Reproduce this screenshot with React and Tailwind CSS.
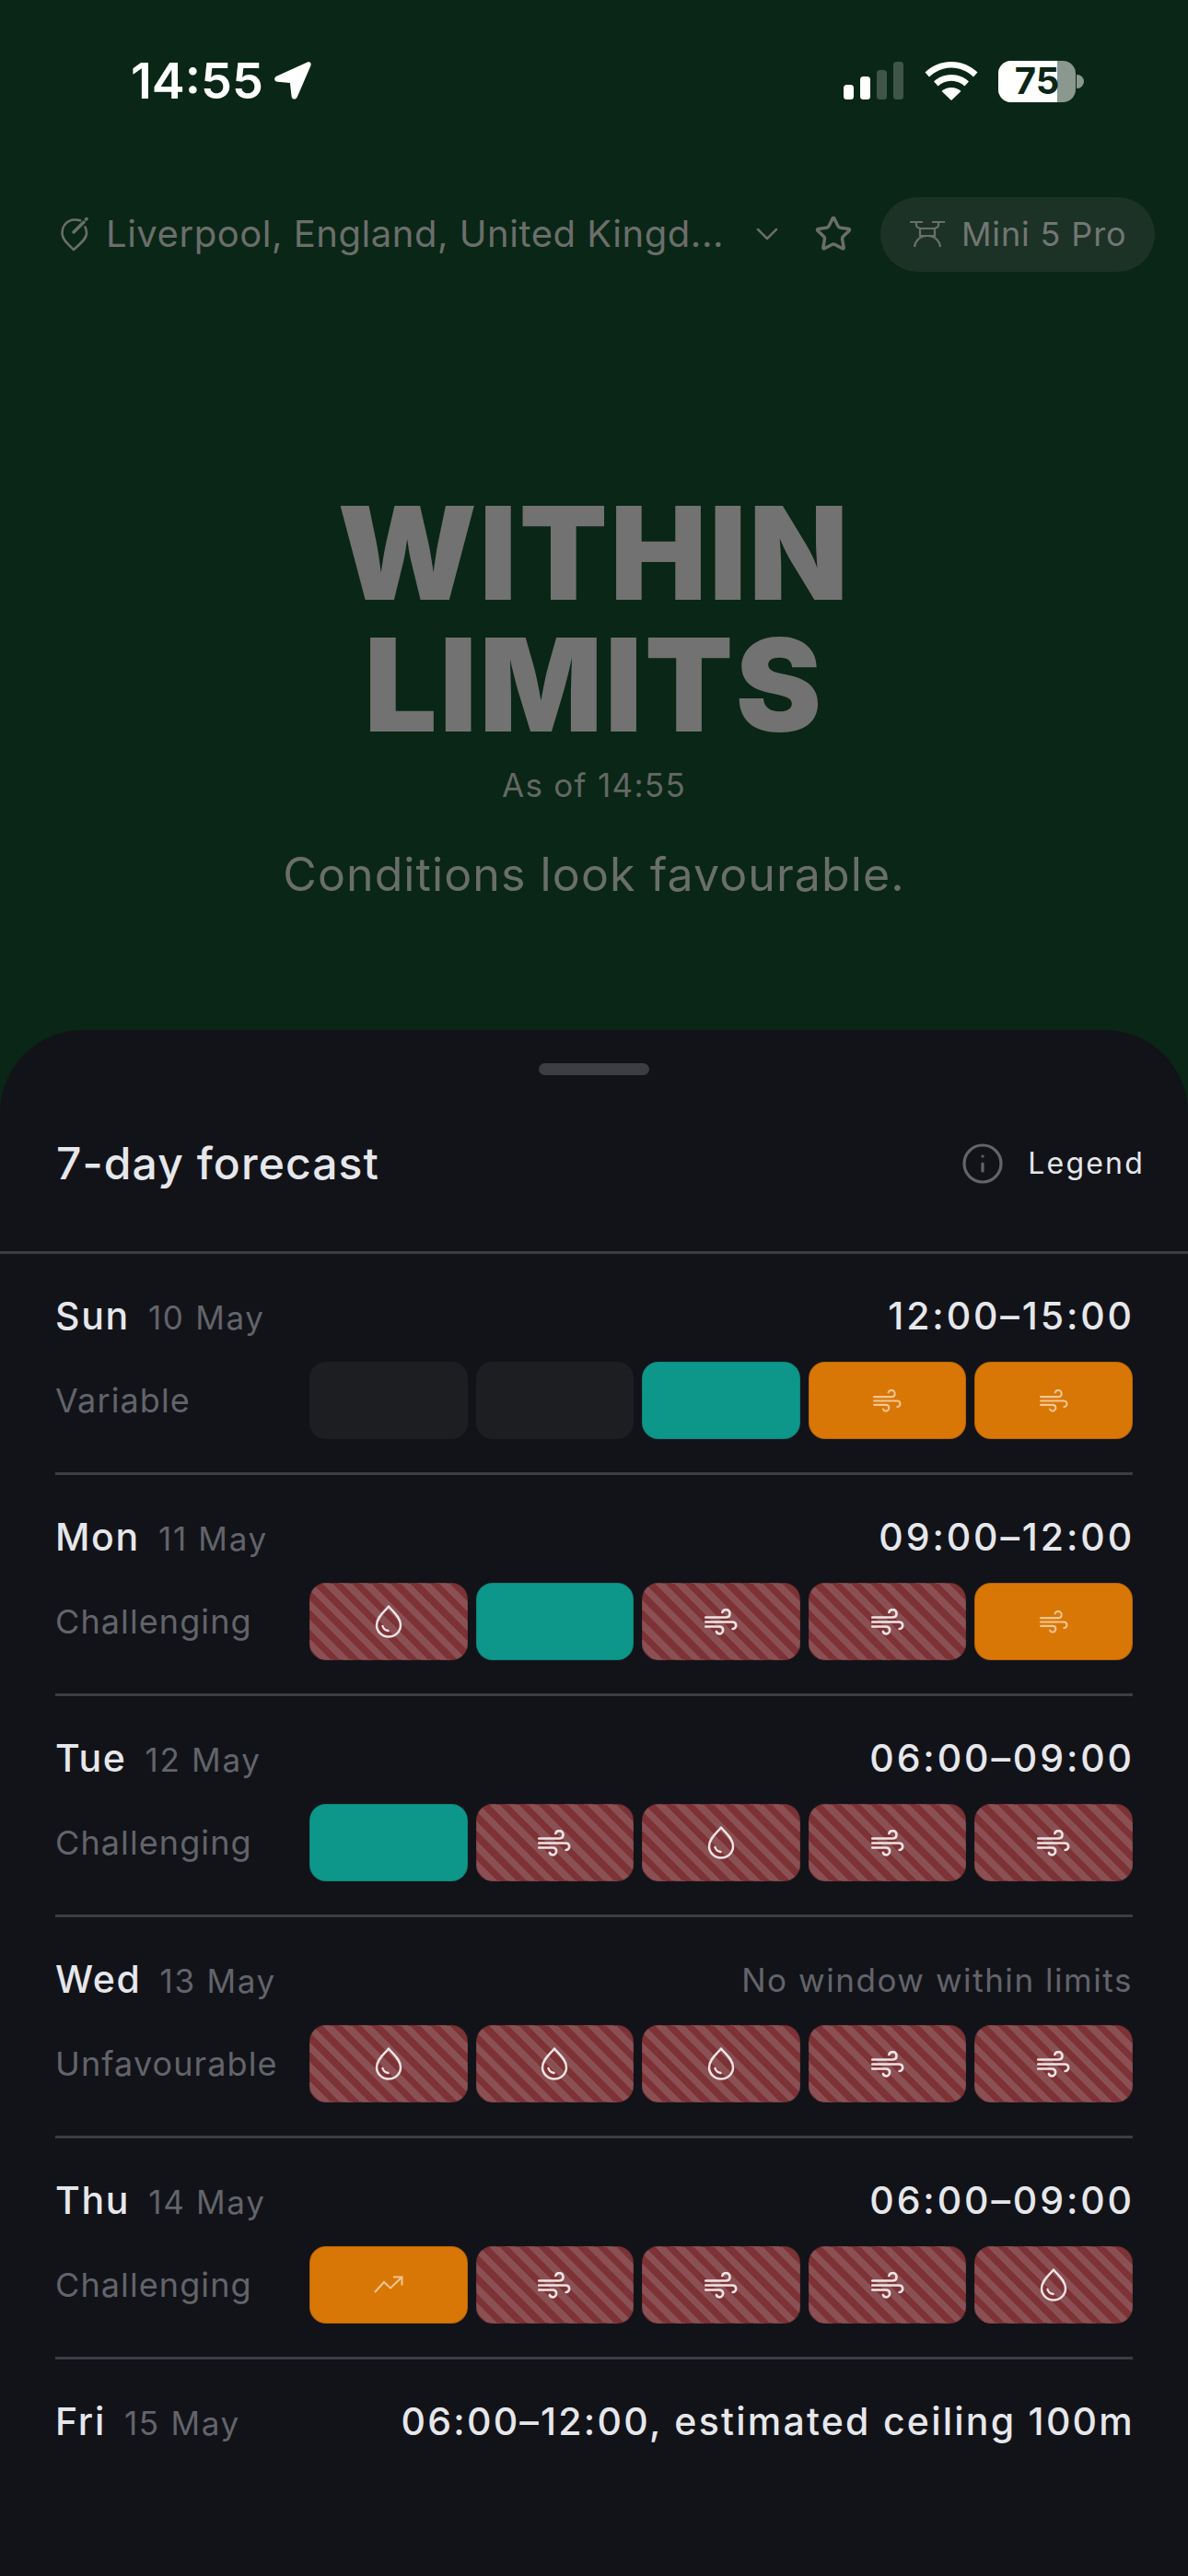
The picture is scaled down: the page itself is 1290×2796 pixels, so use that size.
import React from "react";
import { Star, ChevronDown, Info } from "lucide-react";

const Wind = ({ c, w = 2.2, width = 32, height = 26 }) => (
  <svg width={width} height={height} viewBox="0 0 32 26" fill="none" stroke={c} strokeWidth={w} strokeLinecap="round" className="block">
    <path d="M1 8.500H20.500c2.600 0 4-1.600 4-3.600S23 1 20.800 1c-1.800 0-3.200 1-3.600 2.600" />
    <path d="M1 13H26.500c2.600 0 4 1.600 4 3.400s-1.400 3.300-3.200 3.300" />
    <path d="M1 17.500H14.500c2 0 3.400 1.400 3.400 3.200S16.500 24.500 14.600 24.500c-1.500 0-2.700-.8-3.200-2.100" />
  </svg>
);
const Drop = ({ c }) => (
  <svg width="30" height="36" viewBox="0 0 30 36" fill="none" stroke={c} strokeWidth="2.500" strokeLinecap="round" strokeLinejoin="round" className="block">
    <path d="M15 1.500C11 7 2 13 2 22c0 7 6 12.500 13 12.500S28 29 28 22C28 13 19 7 15 1.500Z" />
    <path d="M8.500 23c.8 2.700 3 4.500 6 5" />
  </svg>
);
const Trend = ({ c }) => (
  <svg width="32" height="20" viewBox="0 0 32 20" fill="none" stroke={c} strokeWidth="2" className="block">
    <path d="M1 18 11 7l7 6.500L30 2" />
    <path d="M21 1.500h9.500V10.500" />
  </svg>
);

const Tile = ({ k }) => {
  if (k === "n") return <div className="h-[84px] rounded-[18px] bg-[#1d1e22]" />;
  if (k === "g") return <div className="h-[84px] rounded-[18px] bg-[#0d978a] border border-black/10" />;
  if (k === "ow")
    return (
      <div className="h-[84px] rounded-[18px] bg-[#d97706] border border-black/15 flex items-center justify-center">
        <Wind c="#f3c694" width={31} height={25} />
      </div>
    );
  if (k === "ot")
    return (
      <div className="h-[84px] rounded-[18px] bg-[#d97706] border border-black/15 flex items-center justify-center">
        <Trend c="#f3c694" />
      </div>
    );
  return (
    <div className="h-[84px] rounded-[18px] flex items-center justify-center border border-black/10 bg-[repeating-linear-gradient(45deg,#7d3336_0px,#7d3336_7.5px,#8b5054_7.5px,#8b5054_15px)]">
      {k === "rw" ? <Wind c="#efe3e4" w={2.4} width={36} height={29} /> : <Drop c="#efe3e4" />}
    </div>
  );
};

const days = [
  ["Sun", "10 May", "12:00–15:00", "Variable", ["n", "n", "g", "ow", "ow"]],
  ["Mon", "11 May", "09:00–12:00", "Challenging", ["rd", "g", "rw", "rw", "ow"]],
  ["Tue", "12 May", "06:00–09:00", "Challenging", ["g", "rw", "rd", "rw", "rw"]],
  ["Wed", "13 May", null, "Unfavourable", ["rd", "rd", "rd", "rw", "rw"]],
  ["Thu", "14 May", "06:00–09:00", "Challenging", ["ot", "rw", "rw", "rw", "rd"]],
];

const DayHead = ({ d, date, t, long }) => (
  <div className="flex items-center justify-between h-[46px]">
    <div className="flex items-baseline">
      <span className="text-[41px] font-medium tracking-[1.7px] text-[#e6e7eb]">{d}</span>
      <span className="text-[35px] tracking-[1.7px] text-[#63646a] ml-[20px]">{date}</span>
    </div>
    {t ? (
      <span className={long ? "text-[41px] font-medium tracking-[2.25px] text-[#e6e7eb] -mr-[2px]" : "text-[41px] font-medium tracking-[2.9px] text-[#e6e7eb] -mr-[2px]"}>{t}</span>
    ) : (
      <span className="text-[35px] tracking-[1.55px] text-[#63646a]">No window within limits</span>
    )}
  </div>
);

export default function App() {
  return (
    <div className="relative w-[1290px] h-[2796px] overflow-hidden bg-[#0a2616] font-['Inter',sans-serif]">
      <div className="h-[214px] flex items-start justify-between pt-[58px] pl-[142px] pr-[113px]">
        <div className="flex items-center h-[60px]">
          <span className="text-[54px] leading-none font-semibold text-white">14:55</span>
          <svg width="44" height="44" viewBox="0 0 42 42" className="ml-[9px]" fill="white">
            <path d="M37 1.500 5 16c-3 1.400-2.500 5.500 1 5.800l13 1.200 1.600 14c.3 3.200 4.500 3.700 5.800.7L40.500 5c1-3-1-4.700-3.500-3.500Z" />
          </svg>
        </div>
        <div className="flex items-center h-[60px]">
          <svg width="66" height="42" viewBox="0 0 66 42" fill="white">
            <rect x="0" y="25" width="11" height="16" rx="3.500" />
            <rect x="18" y="16" width="11" height="25" rx="3.500" />
            <rect x="36" y="9" width="11" height="32" rx="3.500" fillOpacity="0.22" />
            <rect x="54" y="0" width="11" height="41" rx="3.500" fillOpacity="0.22" />
          </svg>
          <svg width="58" height="42" viewBox="0 0 58 42" fill="white" className="ml-[22px]">
            <path d="M29 0C18 0 8 4.300 .5 11.500l4.500 5C11.500 10.300 20 6.500 29 6.500s17.500 3.800 24 10l4.500-5C50 4.300 40 0 29 0Z" />
            <path d="M29 14c-7.500 0-14 2.800-19 7.500l4.600 5C18.500 23 23.500 20.800 29 20.800s10.500 2.200 14.400 5.700l4.600-5C43 16.800 36.500 14 29 14Z" />
            <path d="M29 28c-4 0-7.500 1.500-10.500 4L29 42l10.500-10C36.500 29.500 33 28 29 28Z" />
          </svg>
          <div className="relative ml-[22px] w-[84px] h-[45px] rounded-[14px] bg-[#8a988f]">
            <div className="absolute left-0 top-0 bottom-0 w-[64px] rounded-l-[14px] bg-white" />
            <span className="absolute inset-0 flex items-center justify-center text-[40px] leading-none font-bold text-[#0a2616]">75</span>
          </div>
          <div className="w-[8px] h-[15px] ml-[1px] rounded-r-full bg-[#8a988f]" />
        </div>
      </div>

      <div className="flex items-center h-[80px] pl-[66px]">
        <svg width="30" height="38" viewBox="0 0 30 38" fill="none" stroke="#6a6e6b" strokeWidth="2.600" strokeLinecap="round" strokeLinejoin="round">
          <path d="M21 4.300C19 3.500 17.500 3.500 15 3.500 7 3.500 1.500 10 1.500 18 1.500 25 8 30 14 36c6-6 14-11 14-18 0-2.500-.5-4.500-1.500-6.500" />
          <path d="M14 17 25 6" strokeWidth="3.500" />
          <path d="M27.500 3 28 2.500" strokeWidth="3.500" />
        </svg>
        <span className="ml-[19px] w-[672px] text-[40px] tracking-[0.53px] text-[#6b6e6c] whitespace-nowrap">Liverpool, England, United Kingd...</span>
        <ChevronDown size={40} color="#6a6e6b" strokeWidth={1.5} className="ml-[26px]" />
        <Star size={42} color="#6a6e6b" strokeWidth={2} className="ml-[31px]" />
        <div className="ml-[30px] flex items-center h-[81px] w-[298px] rounded-full bg-[#1c3226] pl-[31px]">
          <svg width="40" height="30" viewBox="0 0 40 30" fill="none" stroke="#6a6e6b" strokeWidth="2.200">
            <path d="M1 2h14M8 2v5M25 2h14M32 2v5M12 9h16v8H12zM8 7l4 2M32 7l-4 2M6 29c1-7 6-12 14-12s13 5 14 12" />
          </svg>
          <span className="ml-[17px] text-[36px] tracking-[0.85px] text-[#737674] whitespace-nowrap">Mini 5 Pro</span>
        </div>
      </div>

      <div className="mt-[235px] flex flex-col items-center">
        <div className="text-[140px] leading-[143px] font-black text-[#727272] text-center tracking-[2.5px]">
          WITHIN
          <br />
          LIMITS
        </div>
        <div className="mt-[15px] text-[35px] leading-[44px] tracking-[1.3px] text-[#646865]">As of 14:55</div>
        <div className="mt-[45px] text-[50px] leading-[60px] tracking-[1.1px] text-[#6a6e6b]">Conditions look favourable.</div>
      </div>

      <div className="absolute left-0 right-0 top-[1118px] bottom-0 rounded-t-[90px] bg-[#121319]">
        <div className="mx-auto mt-[36px] w-[120px] h-[13px] rounded-full bg-[#3c3d42]" />
        <div className="flex items-center justify-between h-[191px] pl-[61px] pr-[47px]">
          <span className="text-[48px] font-medium tracking-[1.1px] text-[#e6e7eb]">7-day forecast</span>
          <div className="flex items-center">
            <Info size={48} color="#63646a" strokeWidth={1.6} />
            <span className="ml-[25px] text-[32px] font-normal tracking-[2.2px] text-[#e6e7eb]">Legend</span>
          </div>
        </div>
        <div className="h-[3px] bg-[#3c3d42]" />
        <div className="pt-[45px] px-[60px] flex flex-col">
          {days.map(([d, date, t, label, tiles]) => (
            <div key={d} className="h-[240px] flex flex-col">
              <DayHead d={d} date={date} t={t} />
              <div className="flex items-center mt-[26px]">
                <span className="w-[276px] text-[36px] tracking-[1.1px] text-[#63646a]">{label}</span>
                <div className="flex-1 grid grid-cols-5 gap-[9px]">
                  {tiles.map((k, i) => (
                    <Tile key={i} k={k} />
                  ))}
                </div>
              </div>
              <div className="mt-[36px] h-[3px] bg-[#3c3d42]" />
            </div>
          ))}
          <DayHead d="Fri" date="15 May" t="06:00–12:00, estimated ceiling 100m" long />
        </div>
      </div>
    </div>
  );
}
